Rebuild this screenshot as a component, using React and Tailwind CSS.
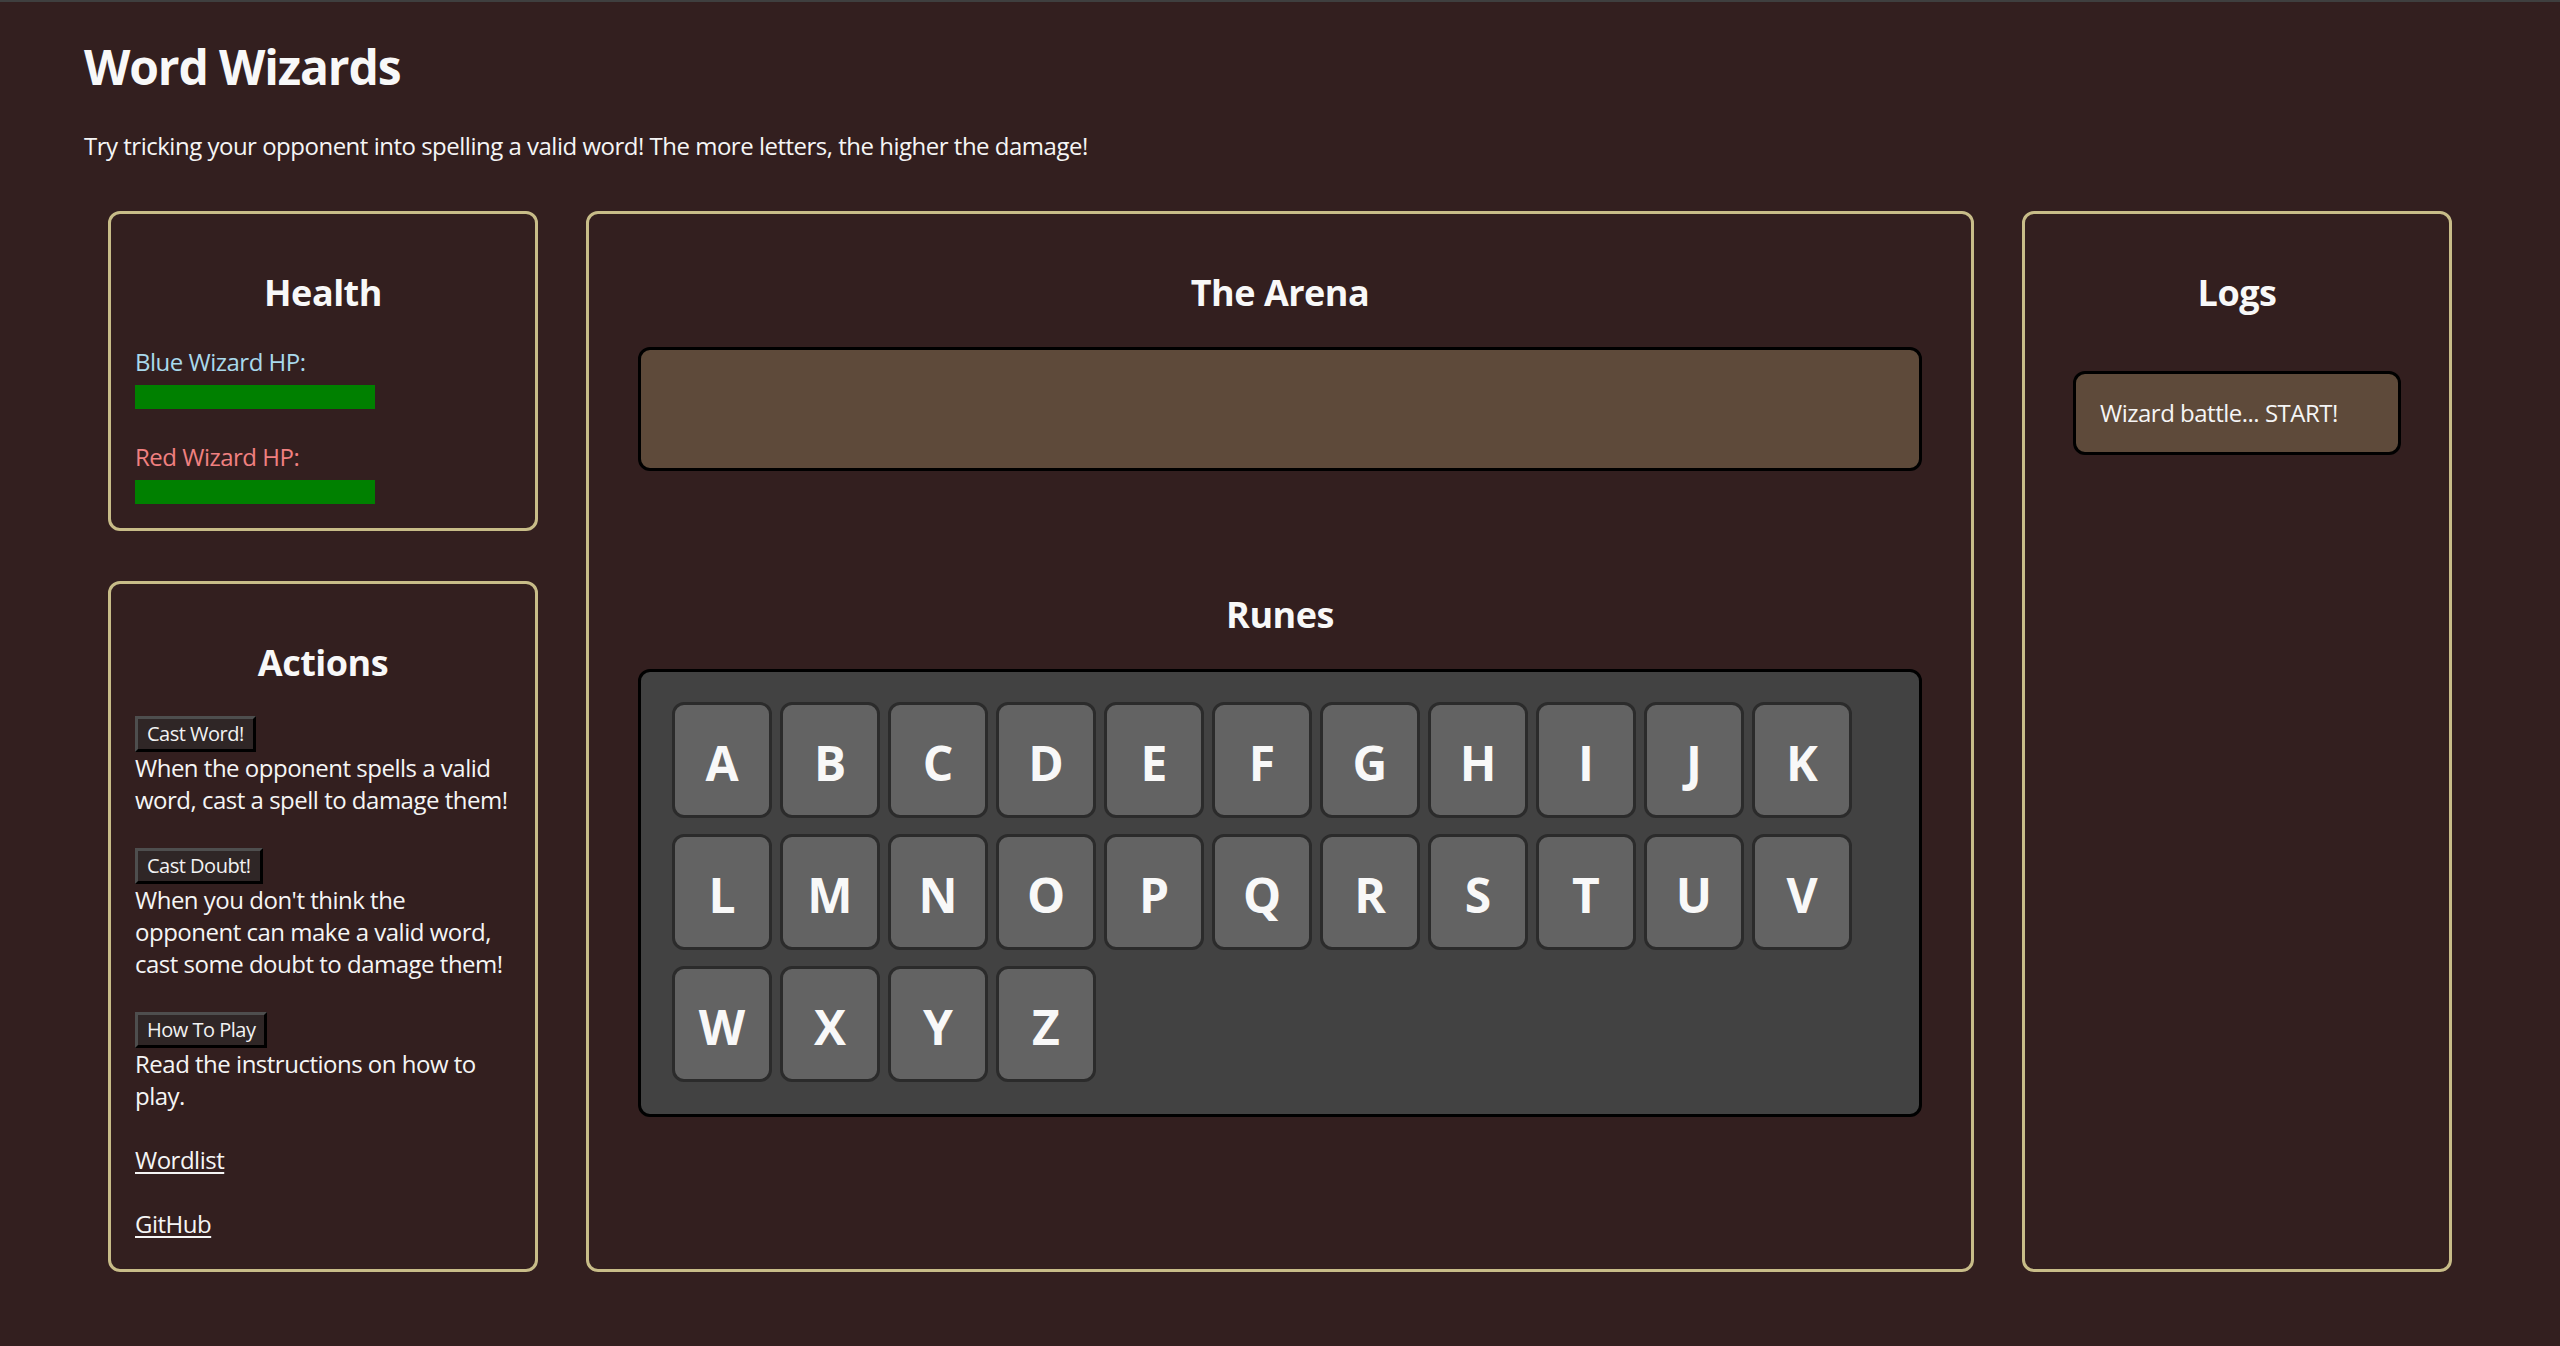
import React from "react";

const rows = [
  ["A", "B", "C", "D", "E", "F", "G", "H", "I", "J", "K"],
  ["L", "M", "N", "O", "P", "Q", "R", "S", "T", "U", "V"],
  ["W", "X", "Y", "Z"],
];

function Panel({ className = "", children }) {
  return (
    <div className={"border-[3px] border-[#c8bc88] rounded-[12px] " + className}>
      {children}
    </div>
  );
}

function Heading({ children, className = "" }) {
  return (
    <h2 className={"text-[36px] leading-[48px] font-bold text-center text-[#f8f8f8] " + className}>
      {children}
    </h2>
  );
}

function ActionButton({ children }) {
  return (
    <button className="self-start h-[36px] px-[9px] text-[20px] leading-[26px] text-[#f2f2f2] bg-[#2f2626] border-[3px] border-t-[#4e4e4e] border-l-[#4e4e4e] border-b-black border-r-black">
      {children}
    </button>
  );
}

export default function App() {
  return (
    <div className="min-h-[1346px] bg-[#331f1f] text-[#f5f5f5] tracking-[-0.031em] font-['Open_Sans','Noto_Sans',sans-serif]">
      <div className="h-[2px] bg-[#3f3f3f]" />
      <div className="pl-[84px]">
        <h1 className="mt-[33px] text-[48px] leading-[64px] font-bold text-[#f8f8f8] tracking-[-0.024em]">Word Wizards</h1>
        <p className="mt-[31px] text-[24px] leading-[32px]">
          Try tricking your opponent into spelling a valid word! The more letters, the higher the damage!
        </p>
      </div>

      <div className="mt-[49px] ml-[108px] w-[2344px] h-[1061px] grid grid-cols-[430px_1388px_430px] gap-x-[48px]">
        {/* Left column */}
        <div className="flex flex-col gap-[50px]">
          <Panel className="h-[320px] px-[24px] pt-[55px]">
            <Heading className="mb-[29px]">Health</Heading>
            <div className="text-[24px] leading-[32px] text-[#a9d9ec]">Blue Wizard HP:</div>
            <div className="mt-[7px] w-[240px] h-[24px] bg-[#008000]" />
            <div className="mt-[32px] text-[24px] leading-[32px] text-[#f08080]">Red Wizard HP:</div>
            <div className="mt-[7px] w-[240px] h-[24px] bg-[#008000]" />
          </Panel>

          <Panel className="flex-1 px-[24px] pt-[55px]">
            <Heading className="mb-[29px]">Actions</Heading>
            <div className="flex flex-col text-[24px] leading-[32px] whitespace-nowrap">
              <ActionButton>Cast Word!</ActionButton>
              <p>
                When the opponent spells a valid
                <br />
                word, cast a spell to damage them!
              </p>
              <div className="h-[32px]" />
              <ActionButton>Cast Doubt!</ActionButton>
              <p>
                When you don't think the
                <br />
                opponent can make a valid word,
                <br />
                cast some doubt to damage them!
              </p>
              <div className="h-[32px]" />
              <ActionButton>How To Play</ActionButton>
              <p>
                Read the instructions on how to
                <br />
                play.
              </p>
              <div className="h-[32px]" />
              <a href="#" className="self-start underline underline-offset-[3px] text-[#f5f5f5]">Wordlist</a>
              <div className="h-[32px]" />
              <a href="#" className="self-start underline underline-offset-[3px] text-[#f5f5f5]">GitHub</a>
            </div>
          </Panel>
        </div>

        {/* Center column */}
        <Panel className="px-[49px] pt-[55px]">
          <Heading className="mb-[30px]">The Arena</Heading>
          <div className="h-[124px] border-[3px] border-black rounded-[12px] bg-[#5e4a3a]" />
          <Heading className="mt-[120px] mb-[30px]">Runes</Heading>
          <div className="border-[3px] border-black rounded-[12px] bg-[#424242] pl-[31px] pr-[20px] pt-[30px] pb-[32px] flex flex-col gap-y-[16px]">
            {rows.map((row, i) => (
              <div key={i} className="flex gap-x-[8px]">
                {row.map((l) => (
                  <div
                    key={l}
                    className="w-[100px] h-[116px] pt-[5px] flex items-center justify-center border-[3px] border-[#2b2b2b] rounded-[12px] bg-[#636363] text-[48px] font-bold text-[#f8f8f8] tracking-normal"
                  >
                    {l}
                  </div>
                ))}
              </div>
            ))}
          </div>
        </Panel>

        {/* Right column */}
        <Panel className="px-[48px] pt-[55px]">
          <Heading className="mb-[54px]">Logs</Heading>
          <div className="border-[3px] border-black rounded-[12px] bg-[#5e4a3a] px-[24px] py-[23px] text-[24px] leading-[32px]">
            Wizard battle... START!
          </div>
        </Panel>
      </div>
    </div>
  );
}
